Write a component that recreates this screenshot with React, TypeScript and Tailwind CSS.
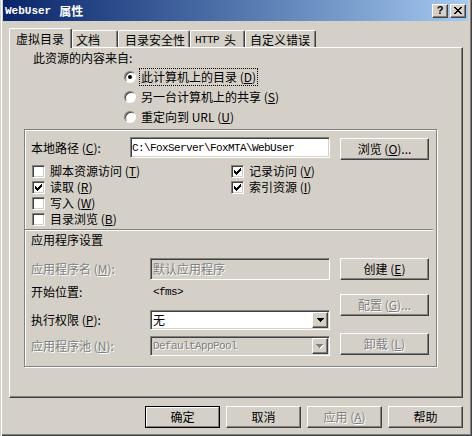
import React from "react";

const RAISED =
  "border border-t-white border-l-white border-r-[#404040] border-b-[#404040] shadow-[inset_-1px_-1px_0_#808080]";
const SUNKEN =
  "border border-t-[#808080] border-l-[#808080] border-r-white border-b-white shadow-[inset_1px_1px_0_#404040,inset_-1px_-1px_0_#d4d0c8]";
const DIS = "text-[#808080] [text-shadow:1px_1px_0_#fff]";
const MONO = "font-['Liberation_Mono',monospace] text-[11px] tracking-[-0.6px]";

const CHECK = ["......#", ".....##", "#...###", "##.###.", "#####..", ".###...", "..#...."];
const CROSS = ["##....##", ".##..##.", "..####..", "...##...", "..####..", ".##..##.", "##....##"];
const ARROW = ["#######", ".#####.", "..###..", "...#..."];

function Pix({ rows, color = "#000", shadow = false }: { rows: string[]; color?: string; shadow?: boolean }) {
  const w = rows[0].length;
  const h = rows.length;
  const cells: React.ReactNode[] = [];
  rows.forEach((r, y) =>
    [...r].forEach((c, x) => {
      if (c !== "#") return;
      if (shadow) cells.unshift(<rect key={`s${x}-${y}`} x={x + 1} y={y + 1} width={1} height={1} fill="#fff" />);
      cells.push(<rect key={`${x}-${y}`} x={x} y={y} width={1} height={1} fill={color} />);
    })
  );
  return (
    <svg width={w + (shadow ? 1 : 0)} height={h + (shadow ? 1 : 0)} shapeRendering="crispEdges">
      {cells}
    </svg>
  );
}

function Key({ k }: { k: string }) {
  return (
    <>
      {" ("}
      <span className="underline decoration-1 underline-offset-[1px]">{k}</span>
      {")"}
    </>
  );
}

function Btn({
  className,
  disabled,
  children,
}: {
  className: string;
  disabled?: boolean;
  children: React.ReactNode;
}) {
  return (
    <div className={`${className} ${RAISED} flex shrink-0 items-center justify-center bg-[#d4d0c8] ${disabled ? DIS : ""}`}>
      {children}
    </div>
  );
}

function Check({ checked, children }: { checked?: boolean; children: React.ReactNode }) {
  return (
    <div className="flex h-[16px] items-center">
      <div className={`flex h-[13px] w-[13px] shrink-0 items-center justify-center bg-white ${SUNKEN}`}>
        {checked && <Pix rows={CHECK} />}
      </div>
      <span className="ml-[5px]">{children}</span>
    </div>
  );
}

function Radio({ checked, focus, children }: { checked?: boolean; focus?: boolean; children: React.ReactNode }) {
  return (
    <div className="flex h-[20px] items-center">
      <div className="flex h-[12px] w-[12px] shrink-0 items-center justify-center rounded-full border border-t-[#808080] border-l-[#808080] border-r-white border-b-white bg-white shadow-[inset_1px_1px_0_#404040]">
        {checked && <div className="h-[4px] w-[4px] rounded-full bg-black" />}
      </div>
      <span
        className={`ml-[3px] flex h-[18px] items-center px-[1px] border ${
          focus ? "border-dotted border-black" : "border-transparent"
        }`}
      >
        {children}
      </span>
    </div>
  );
}

function Select({ value, disabled }: { value: string; disabled?: boolean }) {
  return (
    <div className={`flex h-[20px] w-[180px] items-center p-[1px] ${SUNKEN} ${disabled ? "bg-[#d4d0c8]" : "bg-white"}`}>
      <span className={`flex-1 pl-[1px] ${disabled ? `${DIS} ${MONO}` : ""}`}>{value}</span>
      <div className={`flex h-[16px] w-[16px] items-center justify-center bg-[#d4d0c8] ${RAISED}`}>
        <Pix rows={ARROW} color={disabled ? "#808080" : "#000"} shadow={disabled} />
      </div>
    </div>
  );
}

function Tab({ className, children }: { className: string; children: React.ReactNode }) {
  return (
    <div
      className={`${className} flex h-[17px] shrink-0 items-center rounded-t-[2px] border-l border-t border-r border-white border-r-[#404040] pt-[2px] shadow-[inset_-1px_0_0_#808080]`}
    >
      {children}
    </div>
  );
}

export default function App() {
  return (
    <div className="flex h-[436px] w-[472px] flex-col overflow-hidden bg-[#d4d0c8] text-[12px] leading-[16px] text-black font-['Noto_Sans_CJK_SC',sans-serif] shadow-[inset_1px_0_0_#d4d0c8,inset_2px_0_0_#fff,inset_-1px_-1px_0_#404040,inset_-2px_-2px_0_#808080]">
      {/* title bar */}
      <div className="ml-[3px] mr-[4px] flex h-[21px] shrink-0 items-center bg-linear-to-r from-[#0a246a] to-[#a6caf0] pl-[2px] pr-[2px]">
        <span className="font-['Liberation_Mono',monospace] text-[11px] font-bold text-white">WebUser</span>
        <span className="ml-[8px] font-bold text-white">属性</span>
        <div className="ml-auto flex gap-[2px]">
          <div className={`flex h-[14px] w-[16px] items-center justify-center bg-[#d4d0c8] ${RAISED}`}>
            <span className="font-['Liberation_Sans',sans-serif] text-[11px] font-bold leading-none">?</span>
          </div>
          <div className={`flex h-[14px] w-[16px] items-center justify-center bg-[#d4d0c8] ${RAISED}`}>
            <Pix rows={CROSS} />
          </div>
        </div>
      </div>

      {/* tabs */}
      <div className="ml-[9px] mt-[7px] flex h-[19px] shrink-0 items-end">
        <div className="relative z-10 mb-[-1px] flex h-[20px] w-[63px] shrink-0 items-center rounded-t-[2px] border-l border-t border-r border-white border-r-[#404040] bg-[#d4d0c8] pl-[6px] shadow-[inset_-1px_0_0_#808080]">
          虚拟目录
        </div>
        <Tab className="w-[46px] pl-[3px]">文档</Tab>
        <Tab className="w-[72px] pl-[6px]">目录安全性</Tab>
        <Tab className="w-[55px] pl-[4px]">
          <span className="font-['Liberation_Mono',monospace] text-[11px] tracking-[-0.6px]">HTTP</span>
          <span className="ml-[5px]">头</span>
        </Tab>
        <Tab className="w-[71px] pl-[4px]">自定义错误</Tab>
      </div>

      {/* panel */}
      <div className={`ml-[9px] flex h-[351px] w-[454px] shrink-0 flex-col ${RAISED}`}>
        <div className="ml-[23px] mt-[2px] h-[16px]">此资源的内容来自:</div>
        <div className="mt-[1px] flex flex-col pl-[114px]">
          <Radio checked focus>
            此计算机上的目录
            <Key k="D" />
          </Radio>
          <Radio>
            另一台计算机上的共享
            <Key k="S" />
          </Radio>
          <Radio>
            重定向到 URL
            <Key k="U" />
          </Radio>
        </div>

        {/* frame */}
        <div className="ml-[14px] mt-[2px] flex h-[238px] w-[413px] flex-col border border-[#808080] pl-[6px] shadow-[1px_1px_0_#fff,inset_1px_1px_0_#fff]">
          <div className="mt-[7px] flex items-start">
            <div className="flex h-[21px] w-[99px] items-center">
              本地路径
              <Key k="C" />:
            </div>
            <div className={`flex h-[21px] w-[200px] items-center bg-white pl-[1px] ${SUNKEN} ${MONO}`}>
              {"C:\\FoxServer\\FoxMTA\\WebUser"}
            </div>
            <Btn className="ml-[10px] mt-[1px] h-[22px] w-[89px]">
              浏览
              <Key k="O" />
              ...
            </Btn>
          </div>

          <div className="ml-[1px] mt-[3px] flex">
            <div className="flex w-[199px] flex-col">
              <Check>
                脚本资源访问
                <Key k="T" />
              </Check>
              <Check checked>
                读取
                <Key k="R" />
              </Check>
              <Check>
                写入
                <Key k="W" />
              </Check>
              <Check>
                目录浏览
                <Key k="B" />
              </Check>
            </div>
            <div className="flex flex-col">
              <Check checked>
                记录访问
                <Key k="V" />
              </Check>
              <Check checked>
                索引资源
                <Key k="I" />
              </Check>
            </div>
          </div>

          <div className="ml-[-6px] mt-[2px] h-[2px] w-[408px] border-b border-t border-b-white border-t-[#808080]" />
          <div className="mt-[1px] h-[16px]">应用程序设置</div>

          <div className="mt-[10px] flex">
            <div className="flex w-[299px] flex-col">
              <div className="flex h-[22px] items-center">
                <span className={`w-[119px] ${DIS}`}>
                  应用程序名
                  <Key k="M" />:
                </span>
                <div className={`flex h-[22px] w-[180px] items-center bg-[#d4d0c8] pl-[2px] ${SUNKEN} ${DIS}`}>
                  默认应用程序
                </div>
              </div>
              <div className="mt-[2px] flex h-[20px] items-center">
                <span className="w-[119px]">开始位置:</span>
                <span className={`pl-[3px] ${MONO}`}>{"<fms>"}</span>
              </div>
              <div className="mt-[8px] flex h-[20px] items-center">
                <span className="w-[119px]">
                  执行权限
                  <Key k="P" />:
                </span>
                <Select value="无" />
              </div>
              <div className="mt-[6px] flex h-[20px] items-center">
                <span className={`w-[119px] ${DIS}`}>
                  应用程序池
                  <Key k="N" />:
                </span>
                <Select value="DefaultAppPool" disabled />
              </div>
            </div>
            <div className="ml-[10px] flex flex-col">
              <Btn className="h-[22px] w-[89px]">
                创建
                <Key k="E" />
              </Btn>
              <Btn className="mt-[14px] h-[22px] w-[89px]" disabled>
                配置
                <Key k="G" />
                ...
              </Btn>
              <Btn className="mt-[17px] h-[22px] w-[89px]" disabled>
                卸载
                <Key k="L" />
              </Btn>
            </div>
          </div>
        </div>
      </div>

      {/* dialog buttons */}
      <div className="mt-[8px] flex shrink-0 justify-end gap-[6px] pr-[9px]">
        <div className="h-[22px] w-[75px] border border-black">
          <div className="flex h-full w-full items-center justify-center border border-t-white border-l-white border-r-[#808080] border-b-[#808080] bg-[#d4d0c8]">
            确定
          </div>
        </div>
        <Btn className="h-[22px] w-[75px]">取消</Btn>
        <Btn className="h-[22px] w-[75px]" disabled>
          应用
          <Key k="A" />
        </Btn>
        <Btn className="h-[22px] w-[75px]">帮助</Btn>
      </div>
    </div>
  );
}
